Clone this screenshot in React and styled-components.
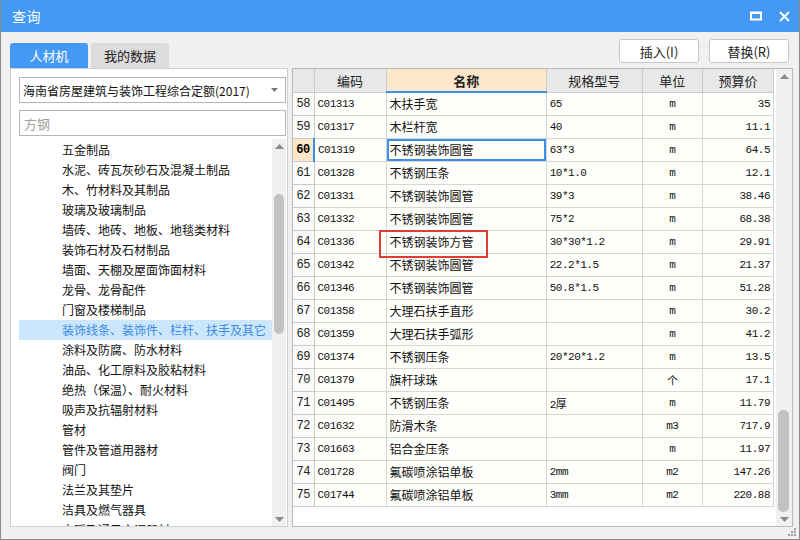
import React from 'react';
import styled, { createGlobalStyle, css } from 'styled-components';

const BLUE = '#4499f6';
const CJK = '"Noto Sans CJK SC", "Liberation Sans", sans-serif';
const MONO = '"Liberation Mono", "Noto Sans CJK SC", monospace';

const GlobalStyle = createGlobalStyle`
  html, body {
    margin: 0;
    padding: 0;
    background: #ffffff;
    font-family: ${CJK};
  }
  * { box-sizing: border-box; }
`;

const categories = [
  '五金制品',
  '水泥、砖瓦灰砂石及混凝土制品',
  '木、竹材料及其制品',
  '玻璃及玻璃制品',
  '墙砖、地砖、地板、地毯类材料',
  '装饰石材及石材制品',
  '墙面、天棚及屋面饰面材料',
  '龙骨、龙骨配件',
  '门窗及楼梯制品',
  '装饰线条、装饰件、栏杆、扶手及其它',
  '涂料及防腐、防水材料',
  '油品、化工原料及胶粘材料',
  '绝热（保温）、耐火材料',
  '吸声及抗辐射材料',
  '管材',
  '管件及管道用器材',
  '阀门',
  '法兰及其垫片',
  '洁具及燃气器具',
  '水暖及通风空调器材',
];

const rows = [
  [58, 'C01313', '木扶手宽', '65', 'm', '35'],
  [59, 'C01317', '木栏杆宽', '40', 'm', '11.1'],
  [60, 'C01319', '不锈钢装饰圆管', '63*3', 'm', '64.5'],
  [61, 'C01328', '不锈钢压条', '10*1.0', 'm', '12.1'],
  [62, 'C01331', '不锈钢装饰圆管', '39*3', 'm', '38.46'],
  [63, 'C01332', '不锈钢装饰圆管', '75*2', 'm', '68.38'],
  [64, 'C01336', '不锈钢装饰方管', '30*30*1.2', 'm', '29.91'],
  [65, 'C01342', '不锈钢装饰圆管', '22.2*1.5', 'm', '21.37'],
  [66, 'C01346', '不锈钢装饰圆管', '50.8*1.5', 'm', '51.28'],
  [67, 'C01358', '大理石扶手直形', '', 'm', '30.2'],
  [68, 'C01359', '大理石扶手弧形', '', 'm', '41.2'],
  [69, 'C01374', '不锈钢压条', '20*20*1.2', 'm', '13.5'],
  [70, 'C01379', '旗杆球珠', '', '个', '17.1'],
  [71, 'C01495', '不锈钢压条', '2厚', 'm', '11.79'],
  [72, 'C01632', '防滑木条', '', 'm3', '717.9'],
  [73, 'C01663', '铝合金压条', '', 'm', '11.97'],
  [74, 'C01728', '氟碳喷涂铝单板', '2mm', 'm2', '147.26'],
  [75, 'C01744', '氟碳喷涂铝单板', '3mm', 'm2', '220.88'],
];

const Arrow = ({ down }) => (
  <svg width="9" height="5" viewBox="0 0 9 5">
    <path d={down ? 'M0 0h9L4.5 5z' : 'M0 5h9L4.5 0z'} fill="#8a8a8a" />
  </svg>
);

const Scroll = ({ thumbTop, thumbHeight }) => (
  <ScrollTrack>
    <ScrollArrow><Arrow /></ScrollArrow>
    <ScrollBody>
      <Thumb style={{ top: thumbTop, height: thumbHeight }} />
    </ScrollBody>
    <ScrollArrow><Arrow down /></ScrollArrow>
  </ScrollTrack>
);

const App = () => {
  return (
    <>
      <GlobalStyle />
      <Window>
        <TitleBar>
          <Title>查询</Title>
          <TitleIcons>
            <svg width="12" height="10" viewBox="0 0 12 10">
              <rect x="1" y="1.5" width="10" height="7" fill="none" stroke="#fff" strokeWidth="2" />
              <rect x="1" y="1" width="10" height="2" fill="#fff" />
            </svg>
            <svg width="11" height="11" viewBox="0 0 11 11">
              <path d="M1 1l9 9M10 1l-9 9" stroke="#fff" strokeWidth="2" />
            </svg>
          </TitleIcons>
        </TitleBar>

        <Body>
          <TopRow>
            <Tabs>
              <Tab active>人材机</Tab>
              <Tab>我的数据</Tab>
            </Tabs>
            <Buttons>
              <Button>插入(I)</Button>
              <Button>替换(R)</Button>
            </Buttons>
          </TopRow>

          <Main>
            <LeftPanel>
              <Select>
                <span>海南省房屋建筑与装饰工程综合定额(2017)</span>
                <svg width="7" height="4" viewBox="0 0 7 4">
                  <path d="M0 0h7L3.5 4z" fill="#777" />
                </svg>
              </Select>
              <SearchInput placeholder="方钢" />
              <TreeBox>
                <TreeList>
                  {categories.map((c, i) => (
                    <TreeItem key={c} selected={i === 9}>{c}</TreeItem>
                  ))}
                </TreeList>
                <Scroll thumbTop={41} thumbHeight={140} />
              </TreeBox>
            </LeftPanel>

            <TablePanel>
              <GridArea>
                <Table>
                  <colgroup>
                    <col style={{ width: 21 }} />
                    <col style={{ width: 72 }} />
                    <col style={{ width: 160 }} />
                    <col style={{ width: 96 }} />
                    <col style={{ width: 60 }} />
                    <col style={{ width: 71 }} />
                  </colgroup>
                  <thead>
                    <tr>
                      <Th />
                      <Th>编码</Th>
                      <Th active>名称</Th>
                      <Th>规格型号</Th>
                      <Th>单位</Th>
                      <Th>预算价</Th>
                    </tr>
                  </thead>
                  <tbody>
                    {rows.map(([n, code, name, spec, unit, price]) => (
                      <tr key={n}>
                        <NumCell current={n === 60}>{n}</NumCell>
                        <Td mono>{code}</Td>
                        <Td focused={n === 60}>{name}</Td>
                        <Td mono>{spec}</Td>
                        <Td mono align="center">{unit}</Td>
                        <Td mono align="right">{price}</Td>
                      </tr>
                    ))}
                  </tbody>
                </Table>
                <Mark />
              </GridArea>
              <Scroll thumbTop={327} thumbHeight={102} />
            </TablePanel>
          </Main>
        </Body>
        <Grip>
          <svg width="8" height="8" viewBox="0 0 8 8">
            <g fill="#a0a0a0">
              <rect x="6" y="0" width="2" height="2" />
              <rect x="3" y="3" width="2" height="2" />
              <rect x="6" y="3" width="2" height="2" />
              <rect x="0" y="6" width="2" height="2" />
              <rect x="3" y="6" width="2" height="2" />
              <rect x="6" y="6" width="2" height="2" />
            </g>
          </svg>
        </Grip>
      </Window>
    </>
  );
};

export default App;

const Window = styled.div`
  position: relative;
  width: 800px;
  height: 540px;
  background: #f0f0f0;
  border: 1px solid #8c8c8c;
  border-top: none;
  display: flex;
  flex-direction: column;
  overflow: hidden;
`;

const TitleBar = styled.div`
  height: 32px;
  flex: none;
  background: ${BLUE};
  display: flex;
  align-items: center;
  justify-content: space-between;
  padding: 0 10px 0 12px;
  margin: 0 -1px;
`;

const Title = styled.div`
  color: #fff;
  font-size: 14px;
  letter-spacing: 0.5px;
`;

const TitleIcons = styled.div`
  display: flex;
  align-items: center;
  gap: 17px;
`;

const Body = styled.div`
  flex: 1;
  min-height: 0;
  display: flex;
  flex-direction: column;
  padding: 0 6px 12px 9px;
`;

const TopRow = styled.div`
  height: 36px;
  flex: none;
  display: flex;
  justify-content: space-between;
`;

const Tabs = styled.div`
  display: flex;
  align-items: flex-end;
  gap: 3px;
`;

const Tab = styled.div`
  width: 78px;
  height: 25px;
  border-radius: 3px 3px 0 0;
  display: flex;
  align-items: center;
  justify-content: center;
  font-size: 13px;
  ${(p) =>
    p.active
      ? css`
          background: ${BLUE};
          color: #fff;
        `
      : css`
          background: #dcdcdc;
          color: #222;
        `}
`;

const Buttons = styled.div`
  display: flex;
  gap: 10px;
  padding-top: 7px;
  padding-right: 4px;
`;

const Button = styled.button`
  width: 80px;
  height: 24px;
  background: #fff;
  border: 1px solid #c6c6c6;
  border-radius: 3px;
  font-family: ${CJK};
  font-size: 13px;
  color: #222;
  padding: 0;
`;

const Main = styled.div`
  flex: 1;
  min-height: 0;
  display: flex;
  gap: 4px;
`;

const LeftPanel = styled.div`
  width: 278px;
  background: #fff;
  border: 1px solid #d0d0d0;
  display: flex;
  flex-direction: column;
  padding: 8px 1px 0 8px;
  gap: 7px;
  overflow: hidden;
`;

const Select = styled.div`
  height: 26px;
  border: 1px solid #b4b4b4;
  display: flex;
  align-items: center;
  justify-content: space-between;
  padding: 0 7px 0 3px;
  font-size: 12px;
  color: #111;
  flex: none;
`;

const SearchInput = styled.input`
  height: 26px;
  border: 1px solid #b4b4b4;
  padding: 0 4px;
  font-family: ${CJK};
  font-size: 13px;
  outline: none;
  flex: none;
  &::placeholder {
    color: #a0a0a0;
  }
`;

const TreeBox = styled.div`
  flex: 1;
  margin-top: -4px;
  display: flex;
  min-height: 0;
  overflow: hidden;
`;

const TreeList = styled.div`
  flex: 1;
  padding-top: 1px;
  overflow: hidden;
`;

const TreeItem = styled.div`
  height: 20px;
  line-height: 20px;
  padding-left: 43px;
  font-size: 12px;
  white-space: nowrap;
  color: ${(p) => (p.selected ? '#3b8be6' : '#111')};
  background: ${(p) => (p.selected ? '#cce6fc' : 'transparent')};
`;

const ScrollTrack = styled.div`
  width: 14px;
  flex: none;
  background: #f0f0f0;
  display: flex;
  flex-direction: column;
  align-items: center;
`;

const ScrollArrow = styled.div`
  height: 14px;
  flex: none;
  display: flex;
  align-items: center;
  justify-content: center;
`;

const ScrollBody = styled.div`
  position: relative;
  flex: 1;
  width: 100%;
`;

const Thumb = styled.div`
  position: absolute;
  left: 2px;
  right: 2px;
  background: #c2c2c2;
  border-radius: 5px;
`;

const TablePanel = styled.div`
  flex: 1;
  display: flex;
  background: #fff;
  border: 1px solid #b8b8b8;
  gap: 2px;
  padding-right: 1px;
  overflow: hidden;
  & > ${ScrollTrack} {
    width: 17px;
  }
  & ${Thumb} {
    left: 2px;
    right: 4px;
  }
`;

const GridArea = styled.div`
  position: relative;
  width: 481px;
  flex: none;
`;

const Table = styled.table`
  table-layout: fixed;
  border-collapse: collapse;
  width: 481px;
`;

const cellBase = css`
  height: 23px;
  padding: 0 3px;
  border: 1px solid #d6d6d6;
  white-space: nowrap;
  overflow: hidden;
`;

const Th = styled.th`
  ${cellBase}
  font-family: ${CJK};
  font-size: 13px;
  color: #222;
  text-align: center;
  border-color: #cacaca;
  border-top: none;
  ${(p) =>
    p.active
      ? css`
          background: #fde6c9;
          font-weight: bold;
          border-bottom: 2px solid #3d8ee8;
        `
      : css`
          background: #e8e8e8;
          font-weight: normal;
        `}
  &:first-child {
    border-left: none;
  }
`;

const NumCell = styled.td`
  ${cellBase}
  border-left: none;
  padding: 0 1px;
  font-family: ${MONO};
  font-size: 12px;
  letter-spacing: -0.5px;
  text-align: center;
  border-color: #cacaca;
  ${(p) =>
    p.current
      ? css`
          background: #fde6c9;
          font-weight: bold;
          border-right: 2px solid #3d8ee8;
        `
      : css`
          background: #fbfbf9;
          color: #222;
        `}
`;

const Td = styled.td`
  ${cellBase}
  background: #fefefb;
  color: #111;
  text-align: ${(p) => p.align || 'left'};
  font-family: ${(p) => (p.mono ? MONO : CJK)};
  font-size: ${(p) => (p.mono ? '11px' : '12px')};
  letter-spacing: ${(p) => (p.mono ? '-0.5px' : '0')};
  ${(p) =>
    p.focused &&
    css`
      box-shadow: inset 0 0 0 2px #3d8ee8;
    `}
`;

const Mark = styled.div`
  position: absolute;
  left: 86px;
  top: 161px;
  width: 109px;
  height: 28px;
  border: 2px solid #e53935;
  pointer-events: none;
`;

const Grip = styled.div`
  position: absolute;
  right: 3px;
  bottom: 3px;
  line-height: 0;
`;
